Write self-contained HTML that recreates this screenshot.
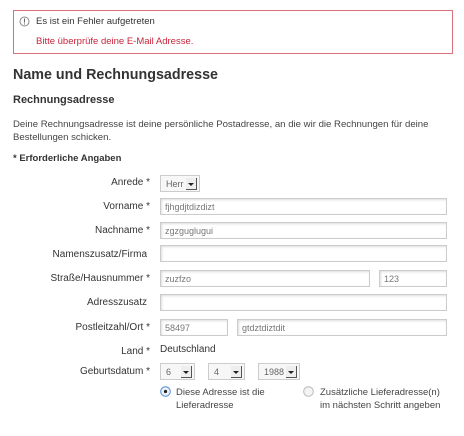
<!DOCTYPE html><html><head><style>
body{margin:0;width:464px;height:436px;background:#fff;font-family:"Liberation Sans",sans-serif;color:#333;position:relative;overflow:hidden}
.a{position:absolute;white-space:nowrap}
.err{left:13px;top:10px;width:440px;height:44px;border:1px solid #d8707a;box-sizing:border-box}
.lb{position:absolute;right:314px;font-size:10px;color:#333;text-align:right}
.in{position:absolute;height:17px;border:1px solid #ccc;box-shadow:inset 1px 1px 2px #ddd;box-sizing:border-box;font-size:9px;color:#777;padding:3px 0 0 4px;background:#fff}
.sel{position:absolute;height:17px;border:1px solid #ccc;box-sizing:border-box;font-size:9px;color:#666;padding:3px 0 0 5px;background:#f7f7f7}
.sel:after{content:"";position:absolute;right:2px;top:2px;width:10px;height:11px;background:#eee;border-right:1px solid #555;border-bottom:1px solid #555}
.sel b{position:absolute;right:5px;top:7px;border:3px solid transparent;border-top:3px solid #222;z-index:1}
</style></head><body>
<div class="a err"></div>
<svg class="a" style="left:19px;top:16px" width="11" height="11"><circle cx="5.5" cy="5.5" r="4.5" fill="none" stroke="#888"/><rect x="5" y="2.5" width="1" height="4" fill="#666"/><rect x="5" y="7.5" width="1" height="1" fill="#666"/></svg>
<div class="a" style="left:36px;top:16px;font-size:9.5px;color:#333">Es ist ein Fehler aufgetreten</div>
<div class="a" style="left:36px;top:36px;font-size:9.5px;color:#c8243a">Bitte überprüfe deine E-Mail Adresse.</div>
<div class="a" style="left:13px;top:67px;font-size:14.3px;font-weight:bold;color:#333">Name und Rechnungsadresse</div>
<div class="a" style="left:13px;top:94px;font-size:11px;font-weight:bold;color:#333">Rechnungsadresse</div>
<div class="a" style="left:13px;top:118px;font-size:9.6px;line-height:13px;color:#444">Deine Rechnungsadresse ist deine persönliche Postadresse, an die wir die Rechnungen für deine<br>Bestellungen schicken.</div>
<div class="a" style="left:13px;top:153px;font-size:9.5px;font-weight:bold;color:#333">* Erforderliche Angaben</div>

<div class="lb" style="top:177px">Anrede *</div>
<div class="sel" style="left:160px;top:175px;width:40px">Herr<b></b></div>
<div class="lb" style="top:201px">Vorname *</div>
<div class="in" style="left:160px;top:198px;width:287px">fjhgdjtdizdizt</div>
<div class="lb" style="top:225px">Nachname *</div>
<div class="in" style="left:160px;top:222px;width:287px">zgzguglugui</div>
<div class="lb" style="top:249px;right:317px">Namenszusatz/Firma</div>
<div class="in" style="left:160px;top:245px;width:287px"></div>
<div class="lb" style="top:273px">Straße/Hausnummer *</div>
<div class="in" style="left:160px;top:270px;width:210px">zuzfzo</div>
<div class="in" style="left:379px;top:270px;width:68px">123</div>
<div class="lb" style="top:297px;right:317px">Adresszusatz</div>
<div class="in" style="left:160px;top:294px;width:287px"></div>
<div class="lb" style="top:322px">Postleitzahl/Ort *</div>
<div class="in" style="left:160px;top:319px;width:68px">58497</div>
<div class="in" style="left:237px;top:319px;width:210px">gtdztdiztdit</div>
<div class="lb" style="top:346px">Land *</div>
<div class="a" style="left:160px;top:344px;font-size:10px;color:#333">Deutschland</div>
<div class="lb" style="top:366px">Geburtsdatum *</div>
<div class="sel" style="left:160px;top:363px;width:35px">6<b></b></div>
<div class="sel" style="left:208px;top:363px;width:37px">4<b></b></div>
<div class="sel" style="left:258px;top:363px;width:42px">1988<b></b></div>
<svg class="a" style="left:160px;top:386px" width="11" height="11"><circle cx="5.5" cy="5.5" r="4.8" fill="#eaf2fb" stroke="#5a8fd0"/><circle cx="5.5" cy="5.5" r="1.6" fill="#222"/></svg>
<div class="a" style="left:176px;top:387px;font-size:9.5px;line-height:12.5px;color:#444">Diese Adresse ist die<br>Lieferadresse</div>
<svg class="a" style="left:303px;top:386px" width="11" height="11"><circle cx="5.5" cy="5.5" r="4.8" fill="#f4f4f4" stroke="#bbb"/></svg>
<div class="a" style="left:320px;top:387px;font-size:9.5px;line-height:12.5px;color:#444">Zusätzliche Lieferadresse(n)<br>im nächsten Schritt angeben</div>
</body></html>
